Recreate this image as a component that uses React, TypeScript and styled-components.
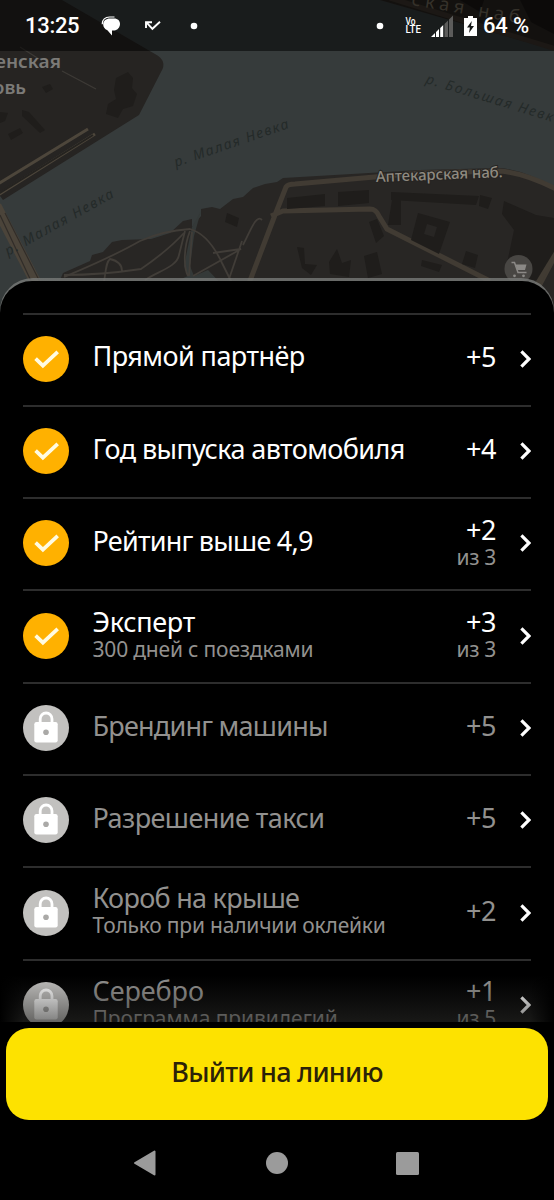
import React from "react";
import styled, { createGlobalStyle } from "styled-components";

const GlobalStyle = createGlobalStyle`
  * { box-sizing: border-box; }
  body { margin: 0; background: #000; }
`;

const Screen = styled.div`
  position: relative;
  display: flex;
  flex-direction: column;
  width: 554px;
  height: 1200px;
  overflow: hidden;
  background: #000;
  color: #fff;
  font-family: "Noto Sans", sans-serif;
`;

const MapCanvas = styled.svg`
  position: absolute;
  top: 0;
  left: 0;
  display: block;
`;

const StatusBar = styled.header`
  position: relative;
  display: flex;
  justify-content: space-between;
  flex: none;
  height: 51px;
  padding: 0 25px;
  background: rgba(0, 0, 0, 0.52);
  font-family: Roboto, sans-serif;
  font-weight: 500;
  font-size: 22px;
  line-height: 53px;
`;

const StatusGroup = styled.div`
  display: flex;
  align-items: center;
  height: 51px;
`;

const Clock = styled.span`
  width: 54px;
  margin-right: 21px;
  white-space: nowrap;
  letter-spacing: -0.3px;
`;

const Battery = styled.span`
  width: 46px;
  margin-left: 6px;
  white-space: nowrap;
  letter-spacing: -0.2px;
`;

const Glyph = styled.svg<{ $gap?: number }>`
  display: block;
  flex: none;
  margin-left: ${(p) => p.$gap ?? 0}px;
`;

const Sheet = styled.main`
  position: relative;
  flex: none;
  height: 744px;
  margin-top: 227px;
  padding-top: 3px;
  border-radius: 33px 33px 0 0;
  background: linear-gradient(rgba(120, 122, 120, 0.8) 0 40px, #000 40px);
`;

const SheetBody = styled.div`
  position: relative;
  height: 741px;
  padding: 31.5px 23px 0;
  overflow: hidden;
  border-radius: 32px 32px 0 0;
  background: #000;
`;

const BottomShade = styled.div`
  position: absolute;
  left: 0;
  right: 0;
  bottom: 0;
  height: 46px;
  background:
    linear-gradient(90deg, #000, rgba(0, 0, 0, 0) 24px, rgba(0, 0, 0, 0) 530px, #000),
    linear-gradient(rgba(40, 40, 38, 0), rgba(40, 40, 38, 0.6));
`;

const Row = styled.div`
  display: flex;
  align-items: center;
  height: 92.3px;
  padding-bottom: 1.5px;
  border-top: 2px solid #2d2d2d;
`;

const Badge = styled.svg`
  flex: none;
  display: block;
  margin-right: 23.5px;
`;

const Info = styled.div<{ $double: boolean }>`
  flex: 1;
  padding-bottom: ${(p) => (p.$double ? 4.5 : 5)}px;
  white-space: nowrap;
`;

const Title = styled.div<{ $muted: boolean; $track: number }>`
  font-size: 27px;
  line-height: 30px;
  letter-spacing: ${(p) => p.$track}px;
  color: ${(p) => (p.$muted ? "#92918f" : "#fff")};
`;

const Note = styled.div<{ $track: number }>`
  font-size: 21px;
  line-height: 24px;
  letter-spacing: ${(p) => p.$track}px;
  color: #92918f;
`;

const Points = styled.div<{ $double: boolean }>`
  padding-bottom: ${(p) => (p.$double ? 3.5 : 4)}px;
  text-align: right;
  white-space: nowrap;
`;

const Chevron = styled.svg`
  flex: none;
  display: block;
  margin-left: 24px;
`;

const Footer = styled.footer`
  display: flex;
  flex-direction: column;
  flex: 1;
  padding: 6px 6px 0;
`;

const PrimaryButton = styled.button`
  height: 92px;
  padding: 0 0 4px;
  border: 0;
  border-radius: 23px;
  background: #fde200;
  color: #2b2208;
  font-family: "Noto Sans", sans-serif;
  font-weight: 500;
  font-size: 27px;
  line-height: 36px;
  letter-spacing: -0.75px;
`;

const NavBar = styled.nav`
  display: flex;
  gap: 108.6px;
  align-items: center;
  height: 80px;
  padding: 6px 0 0 127px;
`;

interface Item {
  title: string;
  track: number;
  note?: string;
  noteTrack?: number;
  points: string;
  of?: string;
  locked?: boolean;
}

const items: Item[] = [
  { title: "Прямой партнёр", track: -0.57, points: "+5" },
  { title: "Год выпуска автомобиля", track: -0.6, points: "+4" },
  { title: "Рейтинг выше 4,9", track: -0.76, points: "+2", of: "из 3" },
  { title: "Эксперт", track: -0.3, note: "300 дней с поездками", noteTrack: -0.18, points: "+3", of: "из 3" },
  { title: "Брендинг машины", track: -0.77, points: "+5", locked: true },
  { title: "Разрешение такси", track: -0.56, points: "+5", locked: true },
  { title: "Короб на крыше", track: -0.72, note: "Только при наличии оклейки", noteTrack: -0.2, points: "+2", locked: true },
  { title: "Серебро", track: -0.1, note: "Программа привилегий", noteTrack: -0.05, points: "+1", of: "из 5", locked: true },
];

function StatusIcon({ locked }: { locked: boolean }) {
  return (
    <Badge width="46" height="46" viewBox="0 0 46 46">
      <circle cx="23" cy="23" r="23" fill={locked ? "#c2c1bf" : "#ffb100"} />
      {locked ? (
        <>
          <path d="M17.2 18v-4.1a5.9 5.9 0 0 1 11.8 0V18" fill="none" stroke="#fff" strokeWidth="2.8" />
          <rect x="11.3" y="17" width="23.4" height="20.4" rx="2.2" fill="#fff" />
          <circle cx="23" cy="27.2" r="2.8" fill="#aaa9a7" />
        </>
      ) : (
        <path d="M12.6 22.6l7.3 7.1 14.8-13.9" fill="none" stroke="#fffbe2" strokeWidth="3.7" />
      )}
    </Badge>
  );
}

function ListRow({ item }: { item: Item }) {
  const locked = !!item.locked;
  return (
    <Row>
      <StatusIcon locked={locked} />
      <Info $double={!!item.note}>
        <Title $muted={locked} $track={item.track}>{item.title}</Title>
        {item.note && <Note $track={item.noteTrack ?? 0}>{item.note}</Note>}
      </Info>
      <Points $double={!!item.of}>
        <Title as="div" $muted={locked} $track={-0.4}>{item.points}</Title>
        {item.of && <Note $track={-0.3}>{item.of}</Note>}
      </Points>
      <Chevron width="11" height="18" viewBox="0 0 11 18">
        <path d="M1.4 1.4L9 9l-7.6 7.6" fill="none" stroke="#fff" strokeWidth="3.2" />
      </Chevron>
    </Row>
  );
}

function CityMap() {
  return (
    <MapCanvas width="554" height="330" viewBox="0 0 554 330" fontFamily="Noto Sans, sans-serif">
      <rect width="554" height="330" fill="#363b3b" />
      <path d="M0 0H62L155 54Q168 61 161 72L139 115L3 200L0 196Z" fill="#262422" />
      <g fill="#1f1d1b">
        <path d="M116 78l12-6 5 6-1 10 5 6-4 12-10 3-5 9-12-4 2-10 8-5-2-9z" />
        <path d="M8 134l12-6 3 5-12 7zM22 110l7 2 16 18-5 3-18-17zM0 112l8 1-3 8-5 2z" />
        <path d="M42 87l8-3 3 5-7 4z" />
      </g>
      <path d="M20 47l19 12M62 71l34 18" stroke="#3d3a36" strokeWidth="1.3" />
      <path d="M-2 184L88 129M-2 195L95 134" stroke="#4d463b" strokeWidth="3" fill="none" />
      <path d="M-2 194L93 135" stroke="#252320" strokeWidth="2" />
      <path d="M-4 206L36 283" stroke="#4b443a" strokeWidth="11" />
      <path d="M0 215L32 283M5 213L40 282" stroke="#312d29" strokeWidth="1.2" />
      <path d="M60 280L63 273L90 261L92 255L103 252L112 242L122 240L151 239L170 233L183 221L192 219L192 227L201 216L201 209L212 207L220 209L233 199L243 197L253 188L265 184L277 182L283 178L420 170L500 168Q525 170 554 188V330H60Z" fill="#282624" />
      <path d="M192 227L184 266L188 276L160 288H225L208 270L194 276L190 266L194 236L201 211Z" fill="#343938" />
      <g fill="none" stroke="#413d38" strokeWidth="1.8">
        <path d="M64 277C90 266 112 257 140 241C160 232 175 230 190 229C204 233 215 248 222 263L234 287" />
        <path d="M64 275C90 275 121 272 141 269C160 256 172 246 184 233M104 282C106 270 106 262 110 259C119 261 122 266 122 271" />
        <path d="M145 280C158 271 177 267 179 255L185 231M190 231C184 246 183 266 188 276M193 276L241 249L213 253M242 241L229 279M262 220C256 214 251 230 243 245M192 232L189 276" />
      </g>
      <path d="M248 286L275 215L286 187Q288 184 295 184L420 173L500 171Q525 173 558 190M271 216L283 211L370 209Q376 209 379 216L387 229L490 281M539 286L556 254" fill="none" stroke="#413b33" strokeWidth="5" />
      <g fill="#1f1d1b">
        <path d="M287 198l38-4v12l-38 3zM338 192l31-2v13l-31 3zM391 192l88 4-3 9-85-5zM480 195l12 3-4 11-9-3zM504 201l32 14 18 3v36l-14 26h-12l-22-12 8-38-12-16z" />
        <path d="M392 200h9v25h-13zM418 213l32 9-11 32-28-14zM297 247l7 1 1 16 12 1-6 10-9-7zM329 262l8-13 5 14 9-3-2 17-19-3zM364 256l13-4 5 22-14 4zM369 222l8-3 7 17-8 7zM422 260l20 5-3 7-18-6zM466 251l12 4-3 13-13-4zM227 213l12 5-2 9-12-5z" />
      </g>
      <path d="M427 224l10 3-3 10-10-3z" fill="#282624" />
      <path d="M536 286L558 250" stroke="#413b33" strokeWidth="5" />
      <g fontWeight="600" fontSize="18" fill="#7b7a77">
        <text x="-5" y="68" textLength="66" lengthAdjust="spacingAndGlyphs">енская</text>
        <text x="-7" y="94" textLength="33" lengthAdjust="spacingAndGlyphs">овь</text>
      </g>
      <g fontStyle="italic" fontSize="14" fill="#242a29">
        <text transform="translate(176 167) rotate(-19)" textLength="120">р. Малая Невка</text>
        <text transform="translate(8 256) rotate(-29)" textLength="122">р. Малая Невка</text>
        <text transform="translate(425 83) rotate(17)" textLength="142">р. Большая Невка</text>
      </g>
      <path d="M380 0H554V50Z" fill="#292420" />
      <path d="M390 -2L556 49" stroke="#3b342c" strokeWidth="5" />
      <path d="M460 0h24l-4 12zM520 0h34v34l-23-12z" fill="#191614" />
      <text transform="translate(411 5) rotate(9.5)" fontSize="18" textLength="109" fill="#6f6859">ская наб</text>
      <text transform="translate(376 182) rotate(-2.2)" fontSize="15" fontWeight="500" textLength="127" fill="#8f8a80" stroke="#262422" strokeWidth="2" paintOrder="stroke">Аптекарская наб.</text>
      <circle cx="518.5" cy="269" r="14" fill="#484643" />
      <path d="M511.500 262.500h3l3.500 10h8.500" fill="none" stroke="#8b8986" strokeWidth="1.5" />
      <path d="M515.500 264.500h11l-1.500 5.500h-7.700z" fill="#8b8986" />
      <circle cx="514.5" cy="275.8" r="1.4" fill="#8b8986" />
      <circle cx="523.5" cy="275.8" r="1.4" fill="#8b8986" />
    </MapCanvas>
  );
}

export default function App() {
  return (
    <>
      <GlobalStyle />
      <Screen>
        <CityMap />
        <StatusBar>
          <StatusGroup>
            <Clock>13:25</Clock>
            <Glyph $gap={1} width="20" height="20" viewBox="0 0 20 20">
              <path d="M1.2 8.2C.9 3.500 4.500 1 8.500 1h5" fill="none" stroke="#fff" strokeWidth="1.2" />
              <path d="M9 2.400h4c4 0 6 2.400 6 5.600s-2.400 6.200-5.600 6.400H11v5l-4.600-5.200C3.600 13.200 2.200 10.800 2.200 8.500 2.200 4.500 5 2.400 9 2.400z" fill="#fff" />
            </Glyph>
            <Glyph $gap={23} width="18" height="12" viewBox="0 0 18 12">
              <path d="M2 8V2.200h6M2.400 2.400l6 6.400L16 1.800" fill="none" stroke="#fff" strokeWidth="1.9" />
            </Glyph>
            <Glyph $gap={28} width="8" height="8"><circle cx="4" cy="4" r="3.3" fill="#fff" /></Glyph>
          </StatusGroup>
          <StatusGroup>
            <Glyph width="8" height="8"><circle cx="4" cy="4" r="3.3" fill="#fff" /></Glyph>
            <Glyph $gap={21} width="17" height="20" viewBox="0 0 17 20" fontFamily="Roboto, sans-serif" fontWeight="500" fill="#fff">
              <text x="0.5" y="8.7" fontSize="10" textLength="10" lengthAdjust="spacingAndGlyphs">Vo</text>
              <text x="0.5" y="17.3" fontSize="10.5" textLength="15.5" lengthAdjust="spacingAndGlyphs">LTE</text>
            </Glyph>
            <Glyph $gap={9} width="22" height="22" viewBox="0 0 22 22">
              <path d="M0 22L4 18v4zM5 17l3-3v8H5zM9.200 13l3-3v12h-3z" fill="#fff" />
              <path d="M13.500 9l3.500-3.500V22h-3.500zM18 4.500L22 .5V22h-4z" fill="#5c5c5b" />
            </Glyph>
            <Glyph $gap={11} width="13" height="20" viewBox="0 0 13 20">
              <path d="M4 0h5v2h4v18H0V2h4z" fill="#fff" />
              <path d="M7.800 5L3 11.500h2.900L5 17l5-7H7z" fill="#151716" />
            </Glyph>
            <Battery>64 %</Battery>
          </StatusGroup>
        </StatusBar>
        <Sheet>
          <SheetBody>
            {items.map((item) => <ListRow key={item.title} item={item} />)}
            <BottomShade />
          </SheetBody>
        </Sheet>
        <Footer>
          <PrimaryButton>Выйти на линию</PrimaryButton>
          <NavBar>
            <svg width="24" height="26" viewBox="0 0 24 26"><path d="M21.500 1.500v23L2 13z" fill="#9b9b9b" stroke="#9b9b9b" strokeWidth="2" strokeLinejoin="round" /></svg>
            <svg width="22" height="22"><circle cx="11" cy="11" r="11" fill="#9b9b9b" /></svg>
            <svg width="23" height="23"><rect width="23" height="23" rx="1.5" fill="#9b9b9b" /></svg>
          </NavBar>
        </Footer>
      </Screen>
    </>
  );
}
